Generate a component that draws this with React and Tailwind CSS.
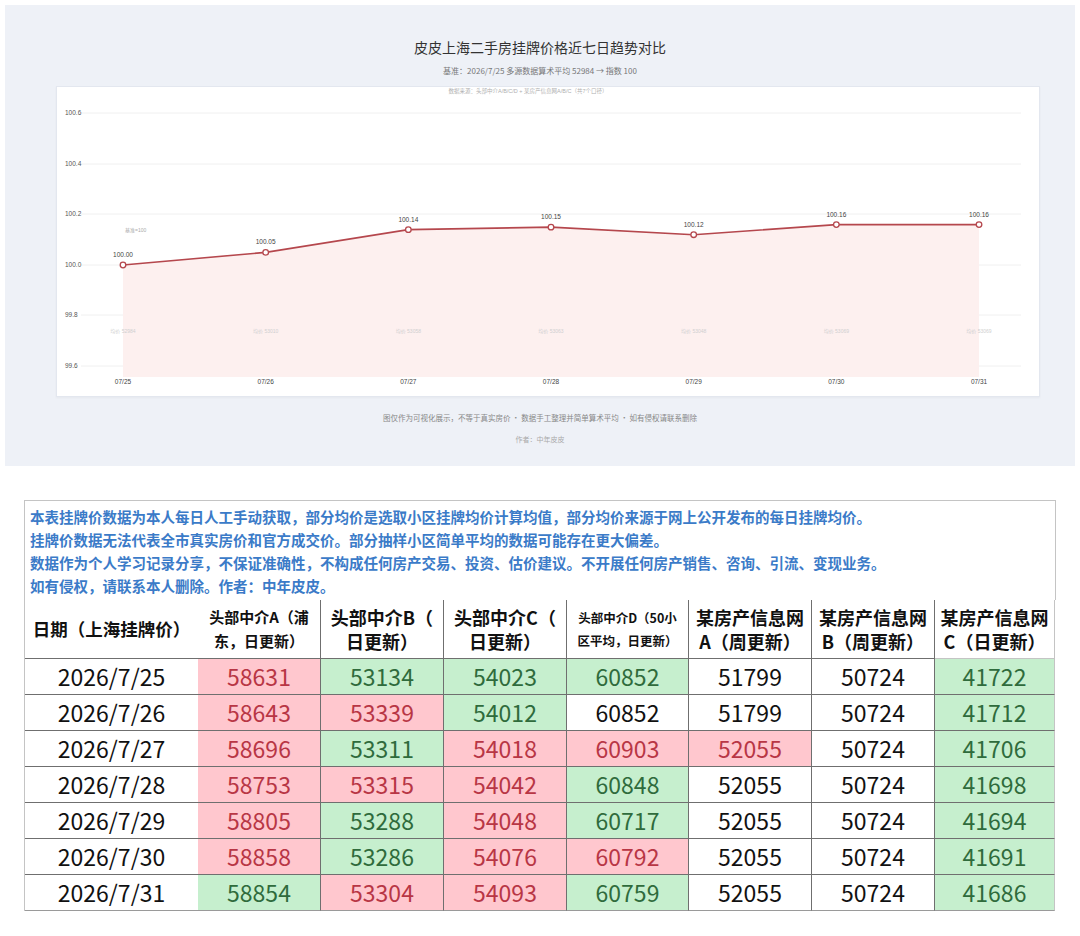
import React from "react";

const FONT = { fontFamily: '"Noto Sans CJK SC", "Noto Sans", sans-serif' };
const CHART_FONT = '"Liberation Sans", "Noto Sans CJK SC", sans-serif';

const points = [
  { d: "07/25", v: 100.0, l: "100.00", avg: "均价 52984" },
  { d: "07/26", v: 100.05, l: "100.05", avg: "均价 53010" },
  { d: "07/27", v: 100.14, l: "100.14", avg: "均价 53058" },
  { d: "07/28", v: 100.15, l: "100.15", avg: "均价 53063" },
  { d: "07/29", v: 100.12, l: "100.12", avg: "均价 53048" },
  { d: "07/30", v: 100.16, l: "100.16", avg: "均价 53069" },
  { d: "07/31", v: 100.16, l: "100.16", avg: "均价 53069" },
];

const px = (i) => 66 + i * 142.67;
const py = (v) => 178 - (v - 100) * 252.5;

function Chart() {
  const grid = [
    ["100.6", 26],
    ["100.4", 77],
    ["100.2", 127],
    ["100.0", 178],
    ["99.8", 228],
    ["99.6", 279],
  ];
  const linePts = points.map((p, i) => `${px(i)},${py(p.v)}`).join(" ");
  const fillPts = `${linePts} ${px(6)},290 ${px(0)},290`;
  return (
    <svg width="984" height="311" viewBox="0 0 984 311" className="block">
      <text x="471" y="6" fontSize="5.5" fill="#b0b0b0" textAnchor="middle" fontFamily={CHART_FONT}>
        数据来源：头部中介A/B/C/D + 某房产信息网A/B/C（共7个口径）
      </text>
      {grid.map(([t, y]) => (
        <g key={t}>
          <line x1="24" x2="964" y1={y} y2={y} stroke="#f0f0f0" strokeWidth="1" />
          <text x="8" y={y + 2.2} fontSize="6.5" fill="#555" fontFamily={CHART_FONT}>
            {t}
          </text>
        </g>
      ))}
      <polygon points={fillPts} fill="#fdf0ef" />
      <polyline points={linePts} fill="none" stroke="#b5474d" strokeWidth="1.6" />
      {points.map((p, i) => (
        <g key={p.d}>
          <circle cx={px(i)} cy={py(p.v)} r="2.8" fill="#fff" stroke="#b5474d" strokeWidth="1.3" />
          <text x={px(i)} y={py(p.v) - 8} fontSize="6.5" fill="#444" textAnchor="middle" fontFamily={CHART_FONT}>
            {p.l}
          </text>
          <text x={px(i)} y="246" fontSize="5" fill="#cfcfcf" textAnchor="middle" fontFamily={CHART_FONT}>
            {p.avg}
          </text>
          <text x={px(i)} y="297" fontSize="6.5" fill="#444" textAnchor="middle" fontFamily={CHART_FONT}>
            {p.d}
          </text>
        </g>
      ))}
      <text x="68" y="145" fontSize="5" fill="#aaa" fontFamily={CHART_FONT}>
        基准=100
      </text>
    </svg>
  );
}

const R = "r";
const G = "g";
const W = "w";

const rows = [
  ["2026/7/25", [["58631", R], ["53134", G], ["54023", G], ["60852", G], ["51799", W], ["50724", W], ["41722", G]]],
  ["2026/7/26", [["58643", R], ["53339", R], ["54012", G], ["60852", W], ["51799", W], ["50724", W], ["41712", G]]],
  ["2026/7/27", [["58696", R], ["53311", G], ["54018", R], ["60903", R], ["52055", R], ["50724", W], ["41706", G]]],
  ["2026/7/28", [["58753", R], ["53315", R], ["54042", R], ["60848", G], ["52055", W], ["50724", W], ["41698", G]]],
  ["2026/7/29", [["58805", R], ["53288", G], ["54048", R], ["60717", G], ["52055", W], ["50724", W], ["41694", G]]],
  ["2026/7/30", [["58858", R], ["53286", G], ["54076", R], ["60792", R], ["52055", W], ["50724", W], ["41691", G]]],
  ["2026/7/31", [["58854", G], ["53304", R], ["54093", R], ["60759", G], ["52055", W], ["50724", W], ["41686", G]]],
];

const cellColor = {
  r: "bg-[#ffc7ce] text-[#b83645]",
  g: "bg-[#c6efce] text-[#2f6b3c]",
  w: "bg-white text-[#111]",
};

function HeaderCell({ lines, size, last, first }) {
  return (
    <div
      className={`flex flex-col items-center justify-center text-center font-bold text-[#111] ${size} ${
        first ? "" : last ? "border-r border-[#c4c4c4]" : "border-r border-[#6f6f6f]"
      } border-b border-[#6f6f6f]`}
    >
      {lines.map((l) => (
        <span key={l} className="block whitespace-nowrap">
          {l}
        </span>
      ))}
    </div>
  );
}

function Table() {
  return (
    <div className="ml-[24px] w-[1032px] border-l border-[#c4c4c4]" style={FONT}>
      <div className="h-[100px] border-t border-r border-[#c4c4c4] pt-[4px] pl-[5px] text-[14.5px] leading-[23px] font-bold text-[#3b7bc8]">
        <p className="whitespace-nowrap">本表挂牌价数据为本人每日人工手动获取，部分均价是选取小区挂牌均价计算均值，部分均价来源于网上公开发布的每日挂牌均价。</p>
        <p className="whitespace-nowrap">挂牌价数据无法代表全市真实房价和官方成交价。部分抽样小区简单平均的数据可能存在更大偏差。</p>
        <p className="whitespace-nowrap">数据作为个人学习记录分享，不保证准确性，不构成任何房产交易、投资、估价建议。不开展任何房产销售、咨询、引流、变现业务。</p>
        <p className="whitespace-nowrap">如有侵权，请联系本人删除。作者：中年皮皮。</p>
      </div>
      <div className="grid grid-cols-[173px_123px_123px_123px_122px_123px_123px_120px]">
        <HeaderCell first lines={["日期（上海挂牌价）"]} size="h-[59px] text-[17.5px] leading-[24px]" />
        <HeaderCell lines={["头部中介A（浦", "东，日更新）"]} size="h-[59px] text-[15px] leading-[24px]" />
        <HeaderCell lines={["头部中介B（", "日更新）"]} size="h-[59px] text-[18px] leading-[24px]" />
        <HeaderCell lines={["头部中介C（", "日更新）"]} size="h-[59px] text-[18px] leading-[24px]" />
        <HeaderCell lines={["头部中介D（50小", "区平均，日更新）"]} size="h-[59px] text-[12.5px] leading-[23px]" />
        <HeaderCell lines={["某房产信息网", "A（周更新）"]} size="h-[59px] text-[18px] leading-[24px]" />
        <HeaderCell lines={["某房产信息网", "B（周更新）"]} size="h-[59px] text-[18px] leading-[24px]" />
        <HeaderCell last lines={["某房产信息网", "C（日更新）"]} size="h-[59px] text-[18px] leading-[24px]" />
        {rows.map(([date, cells], ri) => (
          <React.Fragment key={date}>
            <div
              className={`h-[36px] flex items-center justify-center text-[23px] text-[#111] border-b ${
                ri === rows.length - 1 ? "border-[#9a9a9a]" : "border-[#6f6f6f]"
              }`}
            >
              {date}
            </div>
            {cells.map(([v, c], ci) => (
              <div
                key={ci}
                className={`h-[36px] flex items-center justify-center text-[23px] ${cellColor[c]} border-b ${
                  ri === rows.length - 1 ? "border-b-[#9a9a9a]" : "border-b-[#6f6f6f]"
                } border-r ${ci === 6 ? "border-r-[#c4c4c4]" : "border-r-[#6f6f6f]"}`}
              >
                {v}
              </div>
            ))}
          </React.Fragment>
        ))}
      </div>
    </div>
  );
}

export default function App() {
  return (
    <div className="w-[1080px] h-[936px] bg-white pt-[5px] overflow-hidden">
      <section className="ml-[5px] w-[1070px] h-[461px] bg-[#eef1f7] flex flex-col items-center" style={FONT}>
        <h1 className="mt-[32px] text-[14px] leading-[20px] text-[#333] font-normal">皮皮上海二手房挂牌价格近七日趋势对比</h1>
        <p className="mt-[8px] text-[8px] leading-[12px] text-[#777]">基准：2026/7/25 多源数据算术平均 52984 → 指数 100</p>
        <div className="mt-[9px] self-start ml-[51px] w-[984px] h-[311px] bg-white border border-[#e3e7ef] shadow-[0_1px_2px_rgba(0,0,0,0.04)]">
          <Chart />
        </div>
        <p className="mt-[15px] text-[7.5px] leading-[12px] text-[#888]">
          图仅作为可视化展示，不等于真实房价 · 数据手工整理并简单算术平均 · 如有侵权请联系删除
        </p>
        <p className="mt-[9px] text-[7px] leading-[12px] text-[#aaa]">作者：中年皮皮</p>
      </section>
      <div className="h-[34px]" />
      <Table />
    </div>
  );
}
